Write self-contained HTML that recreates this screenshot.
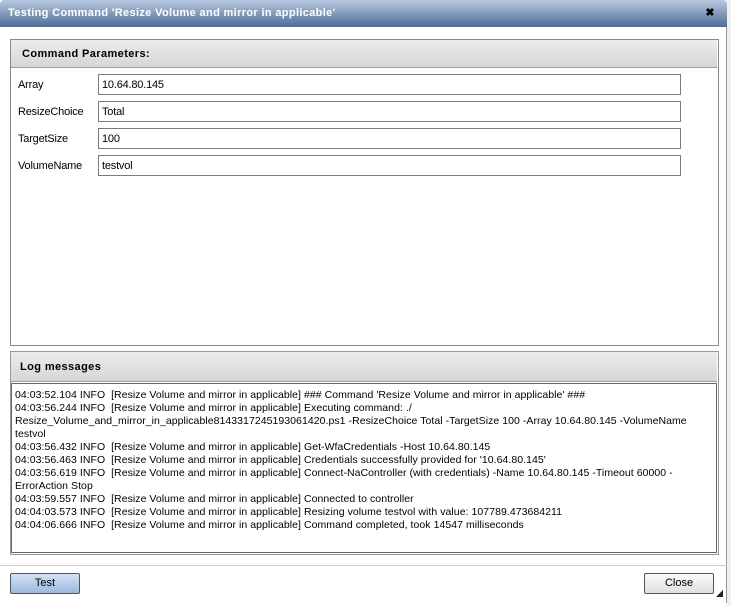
<!DOCTYPE html><html><head><style>
body{margin:0;width:731px;height:606px;background:#fff;position:relative;overflow:hidden;font-family:"Liberation Sans",sans-serif;font-size:11px;color:#000}
.a{position:absolute}
.title{left:0;top:0;width:727px;height:27px;background:linear-gradient(#b7c8de,#4d6e98);border-radius:4px 4px 0 0}
.title span{position:absolute;left:8px;top:7px;color:#fff;font-weight:bold;font-size:11px;letter-spacing:0.35px}
.panel{border:1px solid #8a8a8a;background:#fff}
.hdr{background:linear-gradient(#ececec,#d6d6d6);border-bottom:1px solid #a0a0a0;font-weight:bold;font-size:11px;padding-left:11px;box-sizing:border-box;letter-spacing:0.4px}
.lbl{left:18px;font-size:11px;letter-spacing:-0.2px}
.inp{left:98px;width:583px;height:21px;border:1px solid #7a7a7a;box-sizing:border-box;padding:4px 3px;font-size:11px;letter-spacing:-0.2px}
.log{font-size:10.5px;line-height:13px;letter-spacing:0.05px;padding:5px 3px;white-space:pre}
.btn{height:21px;border:1px solid #555;border-radius:2px;box-sizing:border-box;text-align:center;line-height:19px;font-size:11px}
</style></head><body>
<div class="a" style="left:727px;top:0;width:4px;height:606px;background:#f0f0f0"></div>
<div class="a" style="left:0;top:27px;width:727px;height:576px;background:#fff;border-right:1px solid #999;box-sizing:border-box"></div>
<div class="a title"><span>Testing Command 'Resize Volume and mirror in applicable'</span><span style="left:auto;right:12px;top:6px;color:#000">✖</span></div>
<div class="a panel" style="left:10px;top:39px;width:707px;height:305px"></div>
<div class="a hdr" style="left:11px;top:40px;width:706px;height:28px;line-height:28px">Command Parameters:</div>
<div class="a lbl" style="top:79px">Array</div><div class="a inp" style="top:74px">10.64.80.145</div>
<div class="a lbl" style="top:106px">ResizeChoice</div><div class="a inp" style="top:101px">Total</div>
<div class="a lbl" style="top:133px">TargetSize</div><div class="a inp" style="top:128px">100</div>
<div class="a lbl" style="top:160px">VolumeName</div><div class="a inp" style="top:155px">testvol</div>
<div class="a panel" style="left:10px;top:351px;width:707px;height:202px;border-color:#999"></div>
<div class="a hdr" style="left:11px;top:352px;width:706px;height:30px;line-height:30px;padding-left:9px">Log messages</div>
<div class="a log" style="left:11px;top:383px;width:706px;height:170px;border:1px solid #666;box-sizing:border-box">04:03:52.104 INFO  [Resize Volume and mirror in applicable] ### Command 'Resize Volume and mirror in applicable' ###
04:03:56.244 INFO  [Resize Volume and mirror in applicable] Executing command: ./
Resize_Volume_and_mirror_in_applicable8143317245193061420.ps1 -ResizeChoice Total -TargetSize 100 -Array 10.64.80.145 -VolumeName
testvol
04:03:56.432 INFO  [Resize Volume and mirror in applicable] Get-WfaCredentials -Host 10.64.80.145
04:03:56.463 INFO  [Resize Volume and mirror in applicable] Credentials successfully provided for '10.64.80.145'
04:03:56.619 INFO  [Resize Volume and mirror in applicable] Connect-NaController (with credentials) -Name 10.64.80.145 -Timeout 60000 -
ErrorAction Stop
04:03:59.557 INFO  [Resize Volume and mirror in applicable] Connected to controller
04:04:03.573 INFO  [Resize Volume and mirror in applicable] Resizing volume testvol with value: 107789.473684211
04:04:06.666 INFO  [Resize Volume and mirror in applicable] Command completed, took 14547 milliseconds</div>
<div class="a" style="left:0;top:565px;width:727px;height:1px;background:#ccc"></div>
<div class="a btn" style="left:10px;top:573px;width:70px;background:linear-gradient(#d4e3f4,#9ab8de)">Test</div>
<div class="a btn" style="left:644px;top:573px;width:70px;background:linear-gradient(#fafafa,#e0e0e0)">Close</div>
<div class="a" style="left:716px;top:590px;width:0;height:0;border-left:7px solid transparent;border-bottom:7px solid #222"></div>
</body></html>
